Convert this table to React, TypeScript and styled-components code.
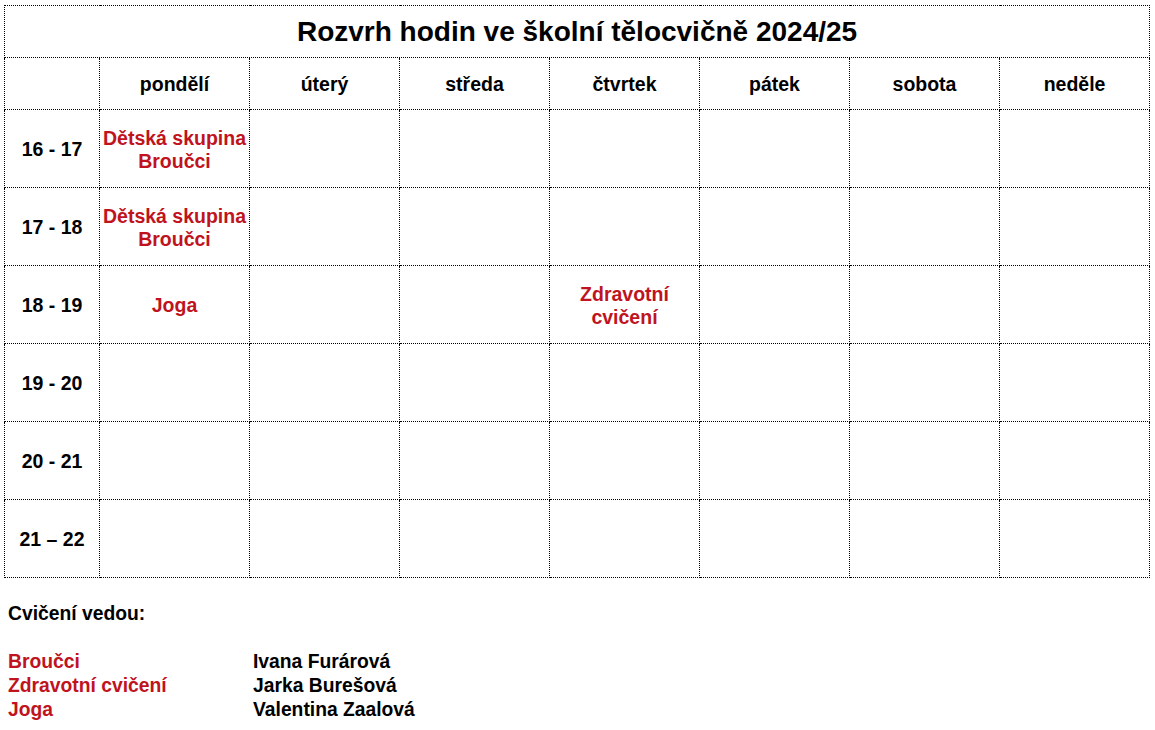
import React from "react";
import styled, { createGlobalStyle } from "styled-components";

const GlobalStyle = createGlobalStyle`
  body {
    margin: 0;
    padding: 5px 0 0 4px;
    background: #fff;
    font-family: "Liberation Sans", Arial, sans-serif;
    color: #000;
  }
`;

const RED = "#c0131d";

const Table = styled.table`
  border-collapse: collapse;
  width: 1146px;
  table-layout: fixed;
  font-weight: bold;

  & td,
  & th {
    border: 1px dotted #000;
    text-align: center;
    vertical-align: middle;
    padding: 2px 0 0;
  }
`;

const TitleCell = styled.th`
  height: 51px;
  font-size: 28px;
  line-height: 30px;
  padding: 0 !important;
`;

const HeadCell = styled.th`
  height: 49px;
  font-size: 19.5px;
`;

const HourCell = styled.td`
  height: 75px;
  font-size: 19.5px;
`;

const Cell = styled.td`
  font-size: 19.5px;
  line-height: 23px;
  color: ${RED};
`;

const Footer = styled.div`
  margin: 24px 0 0 4px;
  font-size: 19.3px;
  font-weight: bold;
  line-height: 24px;
`;

const Lead = styled.div`
  margin-bottom: 24px;
`;

const Leaders = styled.div`
  display: grid;
  grid-template-columns: 245px auto;
`;

const Course = styled.div`
  color: ${RED};
`;

const days = ["pondělí", "úterý", "středa", "čtvrtek", "pátek", "sobota", "neděle"];

const hours = ["16 - 17", "17 - 18", "18 - 19", "19 - 20", "20 - 21", "21 – 22"];

const lessons: Record<string, Record<number, string[]>> = {
  "16 - 17": { 0: ["Dětská skupina", "Broučci"] },
  "17 - 18": { 0: ["Dětská skupina", "Broučci"] },
  "18 - 19": { 0: ["Joga"], 3: ["Zdravotní", "cvičení"] },
};

const leaders = [
  ["Broučci", "Ivana Furárová"],
  ["Zdravotní cvičení", "Jarka Burešová"],
  ["Joga", "Valentina Zaalová"],
];

const App = () => {
  return (
    <>
      <GlobalStyle />
      <Table>
        <colgroup>
          <col style={{ width: 95 }} />
          {days.map((d) => (
            <col key={d} style={{ width: 150 }} />
          ))}
        </colgroup>
        <thead>
          <tr>
            <TitleCell colSpan={8}>Rozvrh hodin ve školní tělocvičně 2024/25</TitleCell>
          </tr>
          <tr>
            <HeadCell />
            {days.map((d) => (
              <HeadCell key={d}>{d}</HeadCell>
            ))}
          </tr>
        </thead>
        <tbody>
          {hours.map((h) => (
            <tr key={h}>
              <HourCell>{h}</HourCell>
              {days.map((d, i) => {
                const lines = lessons[h]?.[i];
                return (
                  <Cell key={d}>
                    {lines?.map((l, j) => (
                      <div key={j}>{l}</div>
                    ))}
                  </Cell>
                );
              })}
            </tr>
          ))}
        </tbody>
      </Table>
      <Footer>
        <Lead>Cvičení vedou:</Lead>
        <Leaders>
          {leaders.map(([course, name]) => (
            <React.Fragment key={course}>
              <Course>{course}</Course>
              <div>{name}</div>
            </React.Fragment>
          ))}
        </Leaders>
      </Footer>
    </>
  );
};

export default App;
